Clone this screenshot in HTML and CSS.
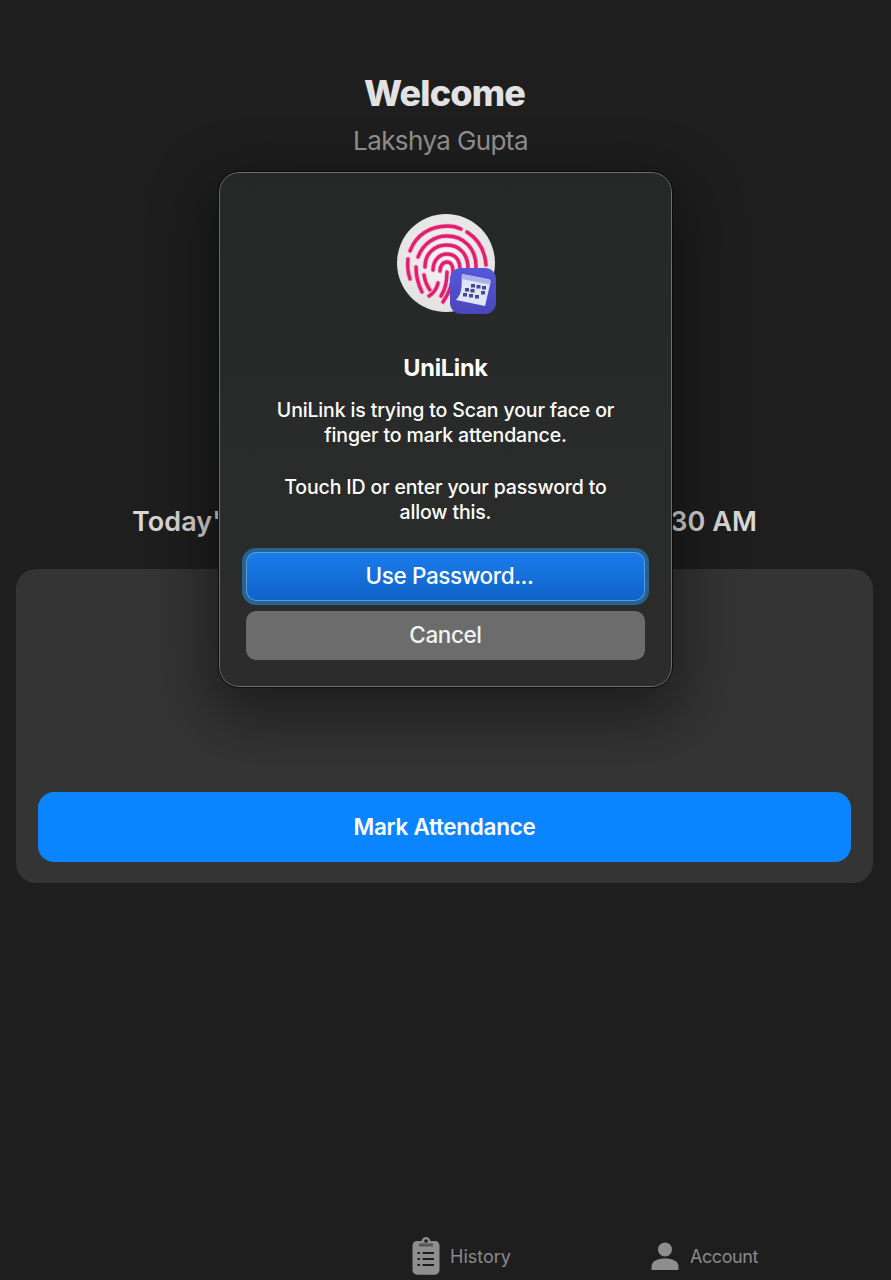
FILE: index.html
```html
<!DOCTYPE html>
<html lang="en">
<head>
    <meta charset="UTF-8">
    <title>UniLink</title>
    <meta name="viewport" content="width=device-width, initial-scale=1.0">
    <link rel="stylesheet" href="styles.css">
</head>
<body>
    <div class="page">
        <header class="welcome">
            <h1>Welcome</h1>
            <div class="user-name">Lakshya Gupta</div>
        </header>
        <div class="class-time">Today's Attendance Timing: 8:30 AM - 9:30 AM</div>
        <div class="card">
            <button class="mark-btn">Mark Attendance</button>
        </div>
        <nav class="tabs">
            <a class="tab tab-history">
                <svg class="tab-icon" width="28" height="38" viewBox="0 0 28 38">
                    <path fill="#8e8e8e" fill-rule="evenodd" d="M5 4h4.500C10 1.500 12 0 14 0s4 1.500 4.500 4H23c2.500 0 4.500 2 4.500 4.500V33c0 2.700-2 4.700-4.500 4.700H5c-2.500 0-4.500-2-4.500-4.700V8.500C.5 6 2.500 4 5 4zM14 2.300a1.800 1.800 0 1 0 0 3.600 1.800 1.800 0 0 0 0-3.600z"/>
                    <path fill="#1e1e1e" d="M7 6.500h14V9.500H7z" opacity=".5"/>
                    <path stroke="#1e1e1e" stroke-width="2" d="M10.500 16H22M10.500 22H22M10.500 28H22M5.500 16H8M5.500 22H8M5.500 28H8"/>
                </svg>
                <span>History</span>
            </a>
            <a class="tab tab-account">
                <svg class="tab-icon" width="28" height="28" viewBox="0 0 28 28">
                    <circle cx="14" cy="7.500" r="7" fill="#8e8e8e"/>
                    <path fill="#8e8e8e" d="M.5 28v-3.500C.5 19 7 16.500 14 16.500S27.500 19 27.500 24.500V28z"/>
                </svg>
                <span>Account</span>
            </a>
        </nav>
    </div>

    <div class="dialog">
        <div class="dialog-icon">
            <svg class="touch-id" width="100" height="100" viewBox="0 0 100 100">
                <defs>
                    <radialGradient id="disc" cx="50%" cy="45%" r="55%">
                        <stop offset="0" stop-color="#f6f6f6"/>
                        <stop offset="1" stop-color="#e2e2e2"/>
                    </radialGradient>
                    <g id="ridges" fill="none" stroke-linecap="round">
                        <path d="M14 38C20 22 34 13 52 13c5 0 9 1 13 3"/>
                        <path d="M71 19c11 7 18 18 19 33"/>
                        <path d="M12 46c-1 8 0 14 2 20"/>
                        <path d="M22 44c5-13 16-21 29-21 17 0 29 13 29 30 0 3 0 6-1 9"/>
                        <path d="M20 54c0 9 2 17 6 25"/>
                        <path d="M29 54c0-14 10-22 22-22 13 0 21 10 21 23 0 2 0 5-1 7"/>
                        <path d="M28 62c1 6 3 11 6 15"/>
                        <path d="M37 57c0-9 6-16 14-16 9 0 13 7 13 16 0 3 0 6-1 9"/>
                        <path d="M33 83c5-3 8-8 9-13"/>
                        <path d="M44 58c0-5 3-9 7-9s6 4 6 9c0 11-3 21-10 31"/>
                        <path d="M51 59c0 11-2 18-6 24"/>
                    </g>
                </defs>
                <circle cx="50" cy="50" r="49" fill="url(#disc)"/>
                <use href="#ridges" stroke="#f4b6d0" stroke-width="5"/>
                <use href="#ridges" stroke="#e0206f" stroke-width="3.400"/>
            </svg>
            <svg class="app-badge" width="48" height="48" viewBox="0 0 48 48">
                <defs>
                    <linearGradient id="badge" x1="0" y1="0" x2="0" y2="1">
                        <stop offset="0" stop-color="#5558d8"/>
                        <stop offset="1" stop-color="#4a46bc"/>
                    </linearGradient>
                </defs>
                <rect x="1" y="1" width="46" height="46" rx="11" fill="url(#badge)"/>
                <path fill="#dfe4f6" d="M13 7l26 5c2 .4 3 1.500 2.500 3.500L36 39 7 33c3-3 5-7 5.500-13z"/>
                <path fill="#a9b2ea" d="M13 7l28.500 6-1 4.500L12.500 12z"/>
                <g fill="#43479b">
                    <rect x="22" y="17" width="4" height="3.500"/>
                    <rect x="27.500" y="18" width="4" height="3.500"/>
                    <rect x="33" y="19" width="4" height="3.500"/>
                    <rect x="16" y="21" width="4" height="3.500"/>
                    <rect x="21.500" y="22" width="4" height="3.500"/>
                    <rect x="32" y="24" width="4" height="3.500"/>
                    <rect x="14" y="26" width="4" height="3.500"/>
                    <rect x="20" y="27" width="4" height="3.500"/>
                    <rect x="26" y="28" width="4" height="3.500"/>
                </g>
            </svg>
        </div>
        <h2>UniLink</h2>
        <p>UniLink is trying to Scan your face or<br>finger to mark attendance.</p>
        <p>Touch ID or enter your password to<br>allow this.</p>
        <div class="dialog-actions">
            <button class="dlg-btn dlg-primary">Use Password...</button>
            <button class="dlg-btn dlg-cancel">Cancel</button>
        </div>
    </div>
</body>
</html>
```

FILE: styles.css
```css
* { box-sizing: border-box; }
html, body { margin: 0; height: 100%; }
body { font-family: Inter, "Liberation Sans", sans-serif; background: #1e1e1e; overflow: hidden; }
.page { height: 1280px; display: flex; flex-direction: column; padding: 0 18px 0 16px; }

.welcome { text-align: center; padding-top: 71px; }
.welcome h1 { margin: 0; font-size: 36px; line-height: 44px; font-weight: 800; color: #e2e2e2; letter-spacing: -0.85px; }
.user-name { margin-top: 9px; margin-right: 8px; font-size: 26px; line-height: 34px; color: #929292; letter-spacing: -0.6px; }

.class-time { margin-top: 347px; text-align: center; font-size: 27px; line-height: 34px; font-weight: 600; color: #d8d8d8; letter-spacing: 0.05px; white-space: nowrap; }

.card { margin-top: 30px; height: 314px; background: #343434; border-radius: 20px; padding: 223px 22px 0 22px; }
.mark-btn { display: block; width: 100%; height: 70px; padding-bottom: 3px; border: 0; border-radius: 16px; background: #0a84ff; color: #fff; font-family: inherit; font-size: 22.500px; font-weight: 600; letter-spacing: -0.3px; }

.tabs { margin-top: auto; height: 44px; margin-bottom: 2px; display: flex; align-items: center; padding-left: 396px; gap: 139px; }
.tab { display: flex; align-items: center; gap: 11px; color: #8a8a8a; font-size: 18px; }
.tab-history { gap: 10px; }
.tab-account { margin-left: 1px; }
.tab-account span { letter-spacing: -0.4px; }

.dialog { position: absolute; left: 219px; top: 172px; width: 453px; height: 515px; background: linear-gradient(#262828, #2c2c2c); border-radius: 20px; border: 1px solid #6f6f6f; outline: 1px solid #0c0c0c; box-shadow: 0 20px 60px 10px rgba(0,0,0,0.45); color: #fff; text-align: center; padding-top: 40px; }
.dialog-icon { position: relative; width: 100px; height: 100px; margin: 0 auto; }
.touch-id { display: block; }
.app-badge { position: absolute; left: 53px; top: 54px; }
.dialog h2 { margin: 40px 0 0; font-size: 23.500px; line-height: 30px; font-weight: 700; letter-spacing: -0.25px; }
.dialog p { margin: 15px 0 0; font-size: 19.500px; line-height: 24.500px; font-weight: 500; letter-spacing: -0.15px; }
.dialog p + p { margin-top: 28px; }
.dialog-actions { margin-top: 28px; padding: 0 26px; display: flex; flex-direction: column; gap: 10px; }
.dlg-btn { display: block; width: 100%; height: 49px; padding: 0 0 3px; border: 0; border-radius: 10px; color: #f2f2f2; font-family: inherit; font-size: 22.500px; font-weight: 500; letter-spacing: -0.4px; }
.dlg-primary { padding-left: 8px; background: linear-gradient(#1b7cec, #0e63c8); box-shadow: 0 0 0 1px #5c9ad8 inset, 0 0 0 4px #24648f; color: #fff; }
.dlg-cancel { background: #6c6c6c; }
```
